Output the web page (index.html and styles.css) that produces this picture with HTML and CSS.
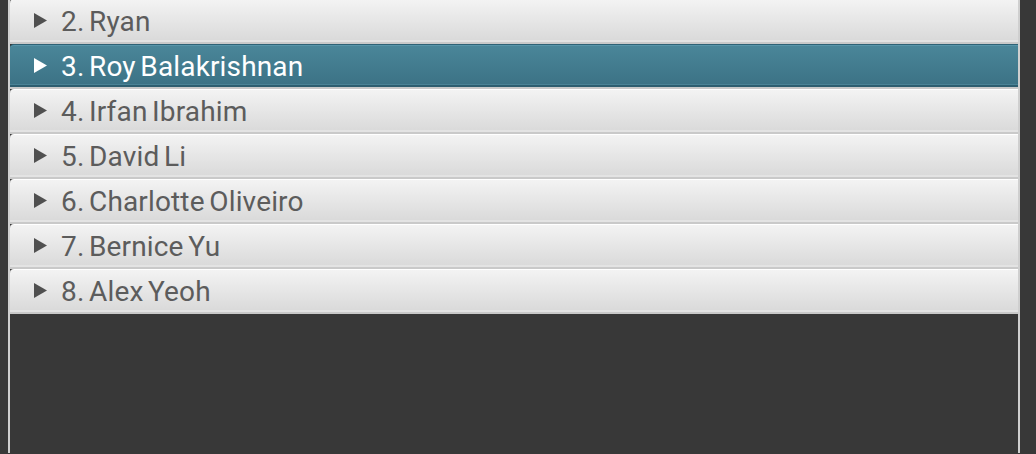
FILE: index.html
```html
<!DOCTYPE html>
<html>
<head>
<meta charset="utf-8">
<link rel="stylesheet" href="styles.css">
</head>
<body>
<div class="list">
  <div class="row first"><div class="head"><svg class="arrow" viewBox="0 0 13 15"><polygon points="0,0 13,7.5 0,15"/></svg><span class="label">2. Ryan</span></div></div>
  <div class="row selected"><div class="head"><svg class="arrow" viewBox="0 0 13 15"><polygon points="0,0 13,7.5 0,15"/></svg><span class="label">3. Roy Balakrishnan</span></div></div>
  <div class="row"><div class="head"><svg class="arrow" viewBox="0 0 13 15"><polygon points="0,0 13,7.5 0,15"/></svg><span class="label">4. Irfan Ibrahim</span></div></div>
  <div class="row"><div class="head"><svg class="arrow" viewBox="0 0 13 15"><polygon points="0,0 13,7.5 0,15"/></svg><span class="label">5. David Li</span></div></div>
  <div class="row"><div class="head"><svg class="arrow" viewBox="0 0 13 15"><polygon points="0,0 13,7.5 0,15"/></svg><span class="label">6. Charlotte Oliveiro</span></div></div>
  <div class="row"><div class="head"><svg class="arrow" viewBox="0 0 13 15"><polygon points="0,0 13,7.5 0,15"/></svg><span class="label">7. Bernice Yu</span></div></div>
  <div class="row"><div class="head"><svg class="arrow" viewBox="0 0 13 15"><polygon points="0,0 13,7.5 0,15"/></svg><span class="label">8. Alex Yeoh</span></div></div>
</div>
</body>
</html>
```
FILE: styles.css
```css
html, body {
  margin: 0;
  padding: 0;
  height: 100%;
  background: #383838;
  overflow: hidden;
}
.list {
  margin-left: 8px;
  width: 1008px;
  height: 100%;
  border-left: 2px solid #cfcfcf;
  border-right: 2px solid #cfcfcf;
  display: flex;
  flex-direction: column;
  margin-top: -1px;
}
.row {
  height: 45px;
  box-sizing: border-box;
  border-bottom: 2px solid #c9c9c9;
  flex: none;
}
.head {
  height: 43px;
  box-sizing: border-box;
  border-radius: 4px 0 0 0;
  background: linear-gradient(#f3f3f3, #dadada);
  border-top: 1px solid #ffffff;
  border-bottom: 2px solid #e3e3e3;
  display: flex;
  align-items: center;
  padding-left: 24px;
  padding-top: 2px;
  color: #5c5c5c;
  font-family: Roboto, "Liberation Sans", sans-serif;
  font-size: 28px;
}
.arrow {
  width: 13px;
  height: 15px;
  fill: #505050;
  margin-right: 14px;
  margin-top: -2px;
  flex: none;
}
.label {
  letter-spacing: 0.15px;
  word-spacing: -2.5px;
}
.selected .head {
  background: linear-gradient(#4a8699, #3c7285);
  border-top: 1px solid #2e6276;
  box-shadow: inset 0 1px 0 #5895a9, inset 0 -1px 0 #4a8396;
  border-bottom: 2px solid #2d5e70;
  color: #ffffff;
}
.selected .arrow {
  fill: #ffffff;
}
```
